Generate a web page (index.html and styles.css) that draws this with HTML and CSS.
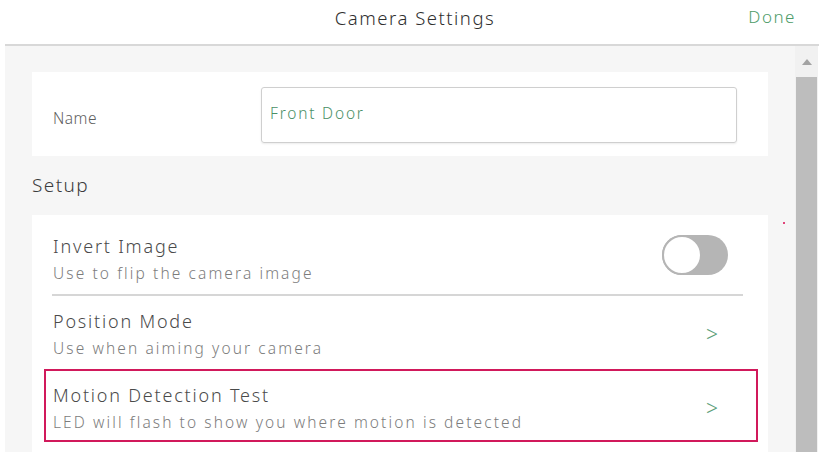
FILE: index.html
```html
<!DOCTYPE html>
<html>
<head>
<meta charset="utf-8">
<link rel="stylesheet" href="styles.css">
</head>
<body>
<div class="app">
  <header class="header">
    <div class="title">Camera Settings</div>
    <div class="done">Done</div>
  </header>
  <div class="main">
    <div class="content">
      <div class="card name-card">
        <div class="name-label">Name</div>
        <div class="input">Front Door</div>
      </div>
      <div class="section-title">Setup</div>
      <div class="card setup-card">
        <div class="row row-divider">
          <div class="row-text">
            <div class="row-title">Invert Image</div>
            <div class="row-sub">Use to flip the camera image</div>
          </div>
          <div class="toggle"><span class="knob"></span></div>
        </div>
        <div class="row">
          <div class="row-text">
            <div class="row-title">Position Mode</div>
            <div class="row-sub">Use when aiming your camera</div>
          </div>
          <div class="chev">&gt;</div>
        </div>
        <div class="row row-highlight">
          <div class="row-text">
            <div class="row-title">Motion Detection Test</div>
            <div class="row-sub">LED will flash to show you where motion is detected</div>
          </div>
          <div class="chev">&gt;</div>
        </div>
      </div>
      <span class="dot"></span>
    </div>
    <div class="scrollbar">
      <div class="arrow-up"></div>
      <div class="thumb"></div>
    </div>
  </div>
</div>
</body>
</html>
```
FILE: styles.css
```css
* { box-sizing: border-box; }
html, body { margin: 0; padding: 0; background: #fff; }
body {
  width: 829px;
  height: 459px;
  overflow: hidden;
  font-family: "Noto Sans", "Open Sans", sans-serif;
  font-weight: 300;
  color: #555;
}
.app { width: 829px; height: 459px; }
.header {
  position: relative;
  height: 46px;
  margin: 0 10px 0 5px;
  border-bottom: 2px solid #d8d8d8;
  display: flex;
  align-items: center;
  justify-content: center;
  padding-bottom: 10px;
  padding-left: 6px;
}
.title {
  font-size: 18.5px;
  color: #2f2f2f;
  letter-spacing: 1.5px;
}
.done {
  position: absolute;
  right: 23px;
  top: 5px;
  font-size: 17px;
  color: #4e9c6a;
  letter-spacing: 1.5px;
}
.main {
  display: flex;
  height: 406px;
  margin: 0 11px 0 5px;
  background: #f6f6f6;
}
.content {
  position: relative;
  flex: 1;
  padding: 26px 27px 0 27px;
  overflow: hidden;
}
.card { background: #fff; }
.name-card {
  display: flex;
  align-items: center;
  padding: 15px 31px 13px 21px;
}
.name-label {
  width: 208px;
  font-size: 15.5px;
  letter-spacing: 0.5px;
  color: #5e5e5e;
  padding-top: 6px;
}
.input {
  flex: 1;
  height: 56px;
  border: 1px solid #cfcfcf;
  border-radius: 3px;
  box-shadow: 0 1px 2px rgba(0,0,0,0.08);
  padding: 0 8px;
  display: flex;
  align-items: center;
  font-size: 15.5px;
  letter-spacing: 1.8px;
  color: #4a8f66;
  padding-bottom: 4px;
}
.section-title {
  height: 59px;
  line-height: 59px;
  font-size: 19px;
  letter-spacing: 1.4px;
  color: #3c3c3c;
}
.setup-card {
  padding-top: 6px;
  height: 300px;
}
.row {
  display: flex;
  align-items: center;
  margin: 0 25px 0 20px;
  padding: 13px 0 10px 1px;
}
.row-divider { border-bottom: 2px solid #d6d6d6; padding-right: 15px; }
.row-text { flex: 1; }
.row-title {
  font-size: 18px;
  line-height: 24px;
  letter-spacing: 1.8px;
  color: #4a4a4a;
}
.row-sub {
  font-size: 15.5px;
  line-height: 22px;
  letter-spacing: 2.1px;
  margin-top: 4px;
  color: #7c7c7c;
}
.chev {
  font-size: 21px;
  line-height: 22px;
  color: #5a9e78;
  padding-right: 25px;
}
.row-highlight {
  margin: 0 10px 0 12px;
  border: 2px solid #d1195b;
  padding: 12px 0 7px 7px;
}
.row-highlight .chev { padding-right: 38px; }
.toggle {
  position: relative;
  width: 66px;
  height: 40px;
  border-radius: 20px;
  background: #b5b5b5;
  margin-top: -9px;
}
.knob {
  position: absolute;
  left: 0;
  top: 0;
  width: 40px;
  height: 40px;
  border-radius: 50%;
  background: #fff;
  border: 2px solid #b5b5b5;
}
.dot {
  position: absolute;
  left: 778px;
  top: 176px;
  width: 2px;
  height: 2px;
  background: #e0457a;
}
.scrollbar {
  width: 23px;
  background: #f1f1f1;
  display: flex;
  flex-direction: column;
  align-items: center;
}
.arrow-up {
  margin-top: 13px;
  width: 0;
  height: 0;
  border-left: 5px solid transparent;
  border-right: 5px solid transparent;
  border-bottom: 6px solid #a3a3a3;
}
.thumb {
  margin-top: 12px;
  width: 21px;
  flex: 1;
  background: #bdbdbd;
}
```
